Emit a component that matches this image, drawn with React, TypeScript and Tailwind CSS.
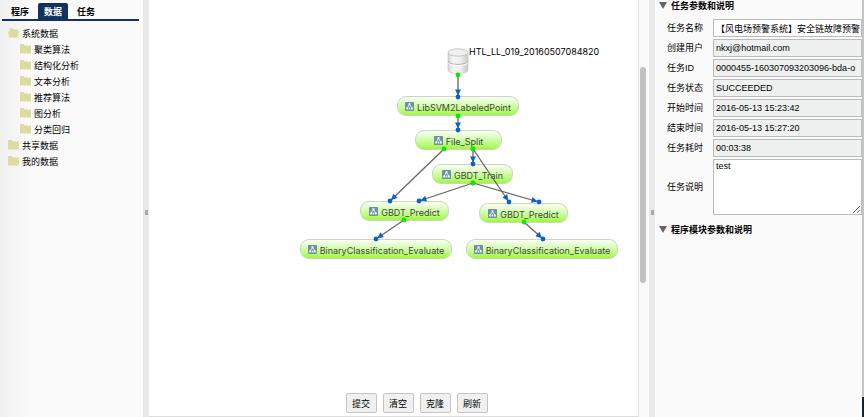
import { useState } from 'react'
import type { ReactNode } from 'react'

const TABS = ['程序', '数据', '任务']

const TREE = [
  {
    name: '系统数据',
    open: true,
    children: ['聚类算法', '结构化分析', '文本分析', '推荐算法', '图分析', '分类回归'],
  },
  { name: '共享数据', open: false, children: [] },
  { name: '我的数据', open: false, children: [] },
]

const FIELDS = [
  { id: 'name', label: '任务名称', value: '【风电场预警系统】安全链故障预警', readOnly: false },
  { id: 'user', label: '创建用户', value: 'nkxj@hotmail.com', readOnly: true },
  { id: 'taskId', label: '任务ID', value: '0000455-160307093203096-bda-o', readOnly: true },
  { id: 'status', label: '任务状态', value: 'SUCCEEDED', readOnly: true },
  { id: 'start', label: '开始时间', value: '2016-05-13 15:23:42', readOnly: true },
  { id: 'end', label: '结束时间', value: '2016-05-13 15:27:20', readOnly: true },
  { id: 'cost', label: '任务耗时', value: '00:03:38', readOnly: true },
]

// canvas coordinates, in px from the canvas' top left corner
const NODES = [
  { label: 'LibSVM2LabeledPoint', x: 248, y: 96, w: 122 },
  { label: 'File_Split', x: 266, y: 130, w: 87 },
  { label: 'GBDT_Train', x: 283, y: 164, w: 81 },
  { label: 'GBDT_Predict', x: 211, y: 201, w: 89 },
  { label: 'GBDT_Predict', x: 330, y: 203, w: 89 },
  { label: 'BinaryClassification_Evaluate', x: 151, y: 239, w: 152 },
  { label: 'BinaryClassification_Evaluate', x: 317, y: 239, w: 152 },
]

const EDGES = [
  [309, 75, 309, 97],
  [309, 116, 309, 130],
  [295, 149, 241, 201],
  [324, 149, 324, 164],
  [324, 149, 360, 202],
  [324, 183, 270, 201],
  [324, 183, 390, 202],
  [255, 220, 227, 239],
  [375, 222, 394, 239],
]

const ACTIONS = ['提交', '清空', '克隆', '刷新']

function FolderIcon({ open }: { open?: boolean }) {
  return (
    <svg width="11" height="10" viewBox="0 0 11 10" className="shrink-0" fill="#dcdca0">
      {open ? (
        <path d="M1.5 1.2 2 .3h3l.6 1.2h4.200v2H11L9.900 9.500H1.300L0 3.500h1.500z" />
      ) : (
        <path d="M0 .6Q0 0 .6 0h3.200l1 1.500h5.600q.6 0 .6.6v6.800q0 .6-.6.6H.6Q0 9.500 0 8.900z" />
      )}
    </svg>
  )
}

function ModuleIcon() {
  return (
    <svg width="9" height="9" viewBox="0 0 9 9" className="shrink-0">
      <rect width="9" height="9" rx="0.8" fill="#6f90a8" />
      <path d="M4.500 2.500 2.200 6M4.500 2.500 6.800 6" stroke="#e6eef3" strokeWidth="0.9" fill="none" />
      <path d="M3.500 1.300h2v2h-2zM1.200 5.400h2v2h-2zM3.900 5.400h1.200v2H3.900zM5.800 5.400h2v2h-2z" fill="#f2f6f9" />
    </svg>
  )
}

function Database() {
  return (
    <svg width="22" height="27" viewBox="0 0 22 27">
      <defs>
        <linearGradient id="drum">
          <stop offset="0" stopColor="#d2d2d2" />
          <stop offset="0.25" stopColor="#f6f6f6" />
          <stop offset="0.6" stopColor="#efefef" />
          <stop offset="1" stopColor="#cacaca" />
        </linearGradient>
      </defs>
      <path d="M1 4.500v17.500c0 5 20 5 20 0V4.500z" fill="url(#drum)" stroke="#c4c4c4" strokeWidth="0.6" />
      <ellipse cx="11" cy="4.500" rx="10" ry="3.700" fill="#efefef" stroke="#b4b4b4" strokeWidth="0.7" />
      <path d="M1 13c0 4.500 20 4.500 20 0" fill="none" stroke="#aaa" strokeWidth="0.9" />
      <path d="M1 14.200c0 4.500 20 4.500 20 0" fill="none" stroke="#fff" strokeWidth="0.8" />
    </svg>
  )
}

function Edges() {
  return (
    <svg className="absolute left-0 top-0 h-full w-full">
      {EDGES.map(([x1, y1, x2, y2], i) => {
        const angle = (Math.atan2(y2 - y1, x2 - x1) * 180) / Math.PI
        return (
          <g key={i}>
            <line x1={x1} y1={y1} x2={x2} y2={y2} stroke="#666" strokeWidth="1.3" />
            <path d="M-1.500 0-7.500-3v6z" fill="#0c62c6" transform={`translate(${x2} ${y2}) rotate(${angle})`} />
            <circle cx={x2} cy={y2} r="2.400" fill="#0c62c6" />
            <circle cx={x1} cy={y1} r="2.400" fill="#00f000" />
          </g>
        )
      })}
    </svg>
  )
}

function Splitter() {
  return (
    <div className="flex w-[6px] shrink-0 items-center justify-center bg-[#e8e8e8]">
      <div className="mt-[7px] h-[5px] w-[3px] bg-[#aaa]" />
    </div>
  )
}

function Section({ title, children }: { title: string; children?: ReactNode }) {
  const [open, setOpen] = useState(true)
  return (
    <section>
      <h2>
        <button type="button" onClick={() => setOpen(!open)} className="flex h-[13px] items-center gap-[4px] font-bold">
          <svg width="8" height="7" viewBox="0 0 8 7" className="mb-[2px]">
            <path d="M0 0h8L4 7z" fill="#666" />
          </svg>
          {title}
        </button>
      </h2>
      {open && children}
    </section>
  )
}

export default function App() {
  const [tab, setTab] = useState('数据')

  return (
    <div className="flex h-screen overflow-hidden bg-white font-['Inter','Liberation_Sans','Noto_Sans_CJK_SC',sans-serif] text-[9px] leading-[13px] text-black">
      {/* Left: data tree */}
      <aside className="w-[143px] shrink-0 bg-linear-to-r from-[#efefef] to-[#fafafa] to-20% pt-[3px]">
        <nav className="ml-[2px] mr-[4px] flex border-b-2 border-[#12335d]">
          {TABS.map((t) => (
            <button
              key={t}
              type="button"
              onClick={() => setTab(t)}
              className={`h-[16px] w-[30px] rounded-t-[2px] font-bold ${
                t === tab ? 'ml-[6px] mr-[3px] bg-[#12335d] text-white' : 'first:ml-[3px] first:-mr-[3px]'
              }`}
            >
              {t}
            </button>
          ))}
        </nav>
        <ul className="pl-[8px] pt-[4px]">
          {TREE.map((node) => (
            <li key={node.name}>
              <div className="flex h-[16px] items-center gap-[3px]">
                <FolderIcon open={node.open} />
                {node.name}
              </div>
              <ul className="pl-[12px]">
                {node.children.map((child) => (
                  <li key={child} className="flex h-[16px] items-center gap-[3px]">
                    <FolderIcon />
                    {child}
                  </li>
                ))}
              </ul>
            </li>
          ))}
        </ul>
      </aside>

      <Splitter />

      {/* Middle: flow canvas */}
      <main className="flex min-w-0 flex-1 flex-col border-b border-[#ddd]">
        <div className="relative flex-1 overflow-hidden">
          <div className="absolute left-[298px] top-[48px]">
            <Database />
          </div>
          <span className="absolute left-[320px] top-[45px]">HTL_LL_019_20160507084820</span>
          {NODES.map((n, i) => (
            <div
              key={i}
              className="absolute flex h-[20px] items-center justify-center gap-[3px] whitespace-nowrap rounded-[9px] border border-[#ccd4c6] bg-linear-to-b from-[#fbfff5] to-[#a0f832] text-[#444]"
              style={{ left: n.x, top: n.y, width: n.w }}
            >
              <ModuleIcon />
              <span className="pt-[3px]">{n.label}</span>
            </div>
          ))}
          <Edges />
        </div>
        <div className="flex justify-center gap-[6px] pb-[3px] pl-[46px]">
          {ACTIONS.map((a) => (
            <button key={a} type="button" className="h-[20px] w-[31px] rounded-[2px] border border-[#c4c4c4] bg-[#f0f0f0]">
              {a}
            </button>
          ))}
        </div>
      </main>

      <div className="w-[11px] shrink-0 border-l border-[#e8e8e8] bg-[#fafafa] pl-px pt-[67px]">
        <div className="h-[216px] w-[6px] rounded-full bg-[#c1c1c1]" />
      </div>

      <Splitter />

      {/* Right: task details */}
      <aside className="w-[207px] shrink-0 bg-[#fafafa] pl-[4px] font-['Liberation_Sans','Noto_Sans_CJK_SC',sans-serif]">
        <Section title="任务参数和说明">
          <div className="grid grid-cols-[54px_1fr] items-center gap-y-[2px] pb-[9px] pt-[6px]">
            {FIELDS.map((f) => (
              <div key={f.id} className="contents">
                <label htmlFor={f.id} className="pl-[8px]">
                  {f.label}
                </label>
                <input
                  id={f.id}
                  defaultValue={f.value}
                  readOnly={f.readOnly}
                  className="h-[18px] w-full border border-[#bbb] bg-white pl-[2px] read-only:bg-[#eff0f0]"
                />
              </div>
            ))}
            <label htmlFor="desc" className="pl-[8px]">
              任务说明
            </label>
            <textarea id="desc" defaultValue="test" className="block h-[56px] w-full border border-[#bbb] bg-white px-[2px]" />
          </div>
        </Section>
        <Section title="程序模块参数和说明" />
      </aside>

      {/* Window edge */}
      <div className="flex w-[2px] shrink-0 flex-col bg-[#c4c4c4]">
        <div className="mt-auto h-[20px] bg-[#14242e]" />
      </div>
    </div>
  )
}
